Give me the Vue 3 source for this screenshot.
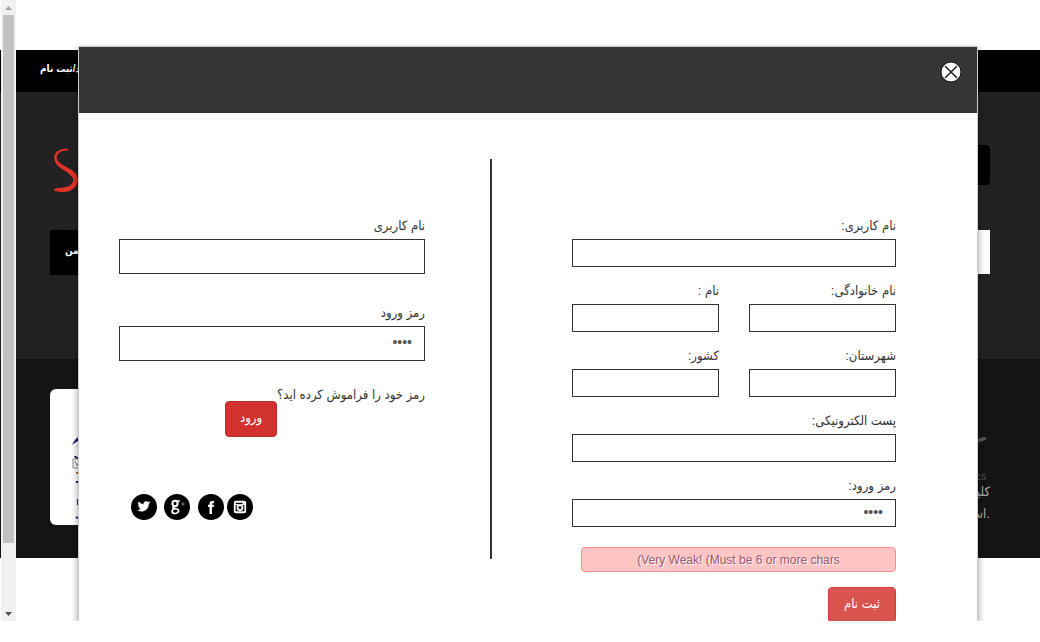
<script setup>
const registerRows = [
  [{ id: 'reg-user', label: 'نام کاربری:', type: 'text', value: '' }],
  [
    { id: 'reg-last', label: 'نام خانوادگی:', type: 'text', value: '' },
    { id: 'reg-first', label: 'نام :', type: 'text', value: '' }
  ],
  [
    { id: 'reg-city', label: 'شهرستان:', type: 'text', value: '' },
    { id: 'reg-country', label: 'کشور:', type: 'text', value: '' }
  ],
  [{ id: 'reg-mail', label: 'پست الکترونیکی:', type: 'email', value: '' }],
  [{ id: 'reg-pass', label: 'رمز ورود:', type: 'password', value: '1234' }]
]
</script>

<template>
  <div class="screen">
    <div class="site">
      <nav class="topbar"><a href="#">ورود/ثبت نام</a></nav>
      <header class="masthead">
        <div class="brand-row">
          <svg class="brand" width="42" height="50" viewBox="0 0 42 50" aria-hidden="true">
            <path d="M18 5C11 4 6 8 6 13C7 23 27 23 27 35C26 46 14 48 5 45L6 44C14 44 24 42 24 35C23 25 5 24 5 13C5 7 12 3 18 5Z" fill="#e43328" stroke="#e43328" stroke-width="1.500" />
          </svg>
          <span class="cart"></span>
        </div>
        <div class="menu-row">
          <a class="menu-link" href="#">انجمن</a>
          <span class="search-box"></span>
        </div>
      </header>
      <footer class="footer">
        <div class="license">
          <svg width="60" height="96" viewBox="0 0 60 96" aria-hidden="true">
            <path d="M2 15Q5 8 14 3V9Q8 10 2 15Z" fill="#18126b" />
            <path d="M3 18L16 10L12 14Z" fill="#c9b5b5" />
            <path d="M5 26q1 3 7 2M6 52h8M6 87q4 3 9 0" fill="none" stroke="#18126b" stroke-width="2" />
            <path d="M3 29h14v9H3zM5 31l2 5 2-5 2 5" fill="none" stroke="#888" />
            <path d="M6 43h5" stroke="#b4673a" stroke-width="2" />
            <path d="M8 69v5h8" fill="none" stroke="#222044" stroke-width="2" />
          </svg>
        </div>
        <div class="about">
          <svg width="60" height="30" viewBox="0 0 60 30" aria-hidden="true">
            <path d="M38 18Q47 4 55 5Q59 7 53 9Q46 10 43 13Z" fill="#555" />
          </svg>
          <small>Comics</small>
          <p>کلیه حقوق</p>
          <p dir="ltr">است.</p>
        </div>
      </footer>
    </div>

    <div class="scrollbar" aria-hidden="true">
      <svg width="15" height="14" viewBox="0 0 15 14"><path d="M4 10L7.500 6L11 10Z" fill="#a3a3a3" /></svg>
      <span class="thumb"></span>
      <svg width="15" height="14" viewBox="0 0 15 14"><path d="M4 5L7.500 9L11 5Z" fill="#505050" /></svg>
    </div>

    <section class="modal" role="dialog" aria-label="ورود/ثبت نام">
      <header class="modal-head">
        <button class="close" type="button" aria-label="بستن">
          <svg width="22" height="22" viewBox="0 0 22 22">
            <circle cx="11" cy="11" r="10" fill="#fff" stroke="#111" />
            <path d="M5 5L17 17M17 5L5 17" stroke="#222" stroke-width="1.500" />
          </svg>
        </button>
      </header>
      <div class="modal-body">
        <form class="login" dir="rtl">
          <div class="field">
            <label for="login-user">نام کاربری</label>
            <input id="login-user" type="text">
          </div>
          <div class="field">
            <label for="login-pass">رمز ورود</label>
            <input id="login-pass" type="password" value="1234">
          </div>
          <div class="login-actions">
            <a href="#">رمز خود را فراموش کرده اید؟</a>
            <button class="btn btn-login" type="button">ورود</button>
          </div>
          <div class="social" dir="ltr">
            <a href="#" aria-label="Twitter">
              <svg width="26" height="26" viewBox="0 0 26 26">
                <circle cx="13" cy="13" r="13" />
                <path transform="translate(6 6) scale(.58)" fill="#fff" stroke="#fff" d="M22 4.500c-.8.400-1.500.600-2.300.700.900-.500 1.500-1.300 1.800-2.200-.8.500-1.700.8-2.600 1a4.200 4.200 0 0 0-7.200 3.800A11.800 11.800 0 0 1 3.100 3.500a4.200 4.200 0 0 0 1.300 5.600c-.7 0-1.300-.2-1.900-.5 0 2 1.400 3.700 3.300 4.100-.6.200-1.200.2-1.900.1.500 1.600 2 2.800 3.900 2.900A8.400 8.400 0 0 1 1.700 17.500 12 12 0 0 0 8 19.300c7.700 0 12.100-6.500 11.800-12.700.9-.6 1.600-1.300 2.200-2.100Z" />
              </svg>
            </a>
            <a href="#" aria-label="Google Plus">
              <svg width="26" height="26" viewBox="0 0 26 26">
                <circle cx="13" cy="13" r="13" />
                <g fill="none" stroke="#fff">
                  <ellipse cx="11" cy="9.500" rx="2.600" ry="2.800" stroke-width="2" />
                  <path d="M12 7h4M10 12.500Q7 14 11 14.500Q15 15 14.500 17.500Q13.500 19.500 11 19.500Q8 19.500 8 17.500Q8 15.500 11 15" stroke-width="1.700" />
                  <path d="M17 10h4M19 8v4" stroke-width=".4" />
                </g>
              </svg>
            </a>
            <a class="facebook" href="#" aria-label="Facebook">
              <svg width="26" height="26" viewBox="0 0 26 26">
                <circle cx="13" cy="13" r="13" />
                <path fill="#fff" d="M11.500 20v-7H10v-2.300h1.500V9.300Q11.500 7 14 7h2v2.300h-1.200q-.8 0-.8.8v.6h2l-.3 2.300H14v7Z" />
              </svg>
            </a>
            <a href="#" aria-label="Instagram">
              <svg width="26" height="26" viewBox="0 0 26 26">
                <circle cx="13" cy="13" r="13" />
                <rect x="7.750" y="7.750" width="10.500" height="10.500" rx="1" fill="none" stroke="#fff" stroke-width="1.800" />
                <circle cx="13" cy="13.500" r="2.500" fill="none" stroke="#fff" stroke-width="1.800" />
                <path d="M7 10.500h4M15 10.500h4" stroke="#fff" />
                <path d="M15.500 8h2v2h-2Z" fill="#fff" />
              </svg>
            </a>
          </div>
        </form>
        <div class="divider"></div>
        <form class="register" dir="rtl">
          <div v-for="row in registerRows" :key="row[0].id" class="form-row">
            <div v-for="field in row" :key="field.id" class="field">
              <label :for="field.id">{{ field.label }}</label>
              <input :id="field.id" :type="field.type" :value="field.value">
            </div>
          </div>
          <div class="strength" dir="ltr">(Very Weak! (Must be 6 or more chars</div>
          <button class="btn btn-register" type="button">ثبت نام</button>
        </form>
      </div>
    </section>
  </div>
</template>

<style>
body {
  margin: 0;
  background: #fff;
}
</style>

<style scoped>
* {
  box-sizing: border-box;
}
.screen {
  position: relative;
  height: calc(100vh - 21px);
  overflow: hidden;
  font-family: "Liberation Sans", "DejaVu Sans Condensed", "DejaVu Sans", sans-serif;
  font-size: 13px;
  line-height: 20px;
  color: #333;
}
a {
  color: inherit;
  text-decoration: none;
}
svg {
  display: block;
}
.site {
  padding-top: 50px;
}
.topbar {
  display: flex;
  height: 42px;
  padding: 9px 40px;
  background: #000;
  color: #fff;
  font-size: 10px;
  font-weight: bold;
  white-space: nowrap;
}
.masthead {
  height: 267px;
  padding: 53px 50px 0;
  background: #222;
}
.brand-row,
.menu-row,
.footer {
  display: flex;
  justify-content: space-between;
}
.brand-row {
  height: 48px;
}
.cart {
  width: 120px;
  height: 40px;
  border-radius: 4px;
  background: #000;
}
.menu-row {
  margin-top: 37px;
}
.menu-link {
  width: 240px;
  height: 45px;
  padding: 11px 15px;
  background: #000;
  color: #fff;
  font-size: 10px;
  font-weight: bold;
}
.search-box {
  width: 200px;
  height: 44px;
  background: #fff;
}
.footer {
  height: 199px;
  padding: 30px 50px;
  background: #141414;
}
.license {
  width: 120px;
  height: 136px;
  padding: 41px 20px 0;
  border-radius: 6px;
  background: #fff;
}
.about {
  display: flex;
  flex-direction: column;
  align-items: flex-end;
  padding-top: 43px;
  color: #aaa;
}
.about small {
  height: 20px;
  padding: 5px 4px 0;
  color: #555;
  font-size: 10px;
}
.about p {
  margin: 0 0 2px;
}
.scrollbar {
  position: absolute;
  inset: 0 auto 0 1px;
  display: flex;
  flex-direction: column;
  width: 15px;
  background: #f1f1f1;
}
.thumb {
  flex: 0 0 85%;
  margin: 1px 2px auto;
  background: #c1c1c1;
}
.modal {
  position: absolute;
  inset: 46px 62px -20px 78px;
  border: 1px solid #ccc;
  background: #fff;
  box-shadow: 0 3px 7px rgba(0, 0, 0, 0.4);
}
.modal-head {
  display: flex;
  justify-content: flex-end;
  height: 66px;
  padding: 14px 15px;
  background: #363638;
}
.close {
  width: 22px;
  height: 22px;
  padding: 0;
  border: 0;
  background: none;
}
.modal-body {
  display: grid;
  grid-template-columns: 371fr 2px 404fr;
  align-items: start;
  padding: 46px 81px 0 40px;
}
.divider {
  height: 400px;
  background: #333;
}
.login {
  margin-right: 65px;
  padding-top: 57px;
}
.register {
  margin-left: 80px;
  padding-top: 57px;
}
.field {
  flex: 1;
  min-width: 0;
}
label {
  display: block;
  height: 23px;
}
input {
  display: block;
  width: 100%;
  height: 28px;
  padding: 0 12px 3px;
  border: 1px solid #333;
  border-radius: 0;
  background: #fff;
  color: #555;
  font: 14px "Liberation Sans", sans-serif;
}
.login input {
  height: 35px;
}
.login .field {
  margin-bottom: 29px;
}
.form-row {
  display: flex;
  gap: 30px;
  margin-bottom: 14px;
}
.login-actions {
  display: flex;
  align-items: flex-start;
  margin-top: -5px;
}
.btn {
  height: 36px;
  padding: 0 15px 3px;
  border: 1px solid #b92c28;
  border-radius: 4px;
  background: #d2322d;
  color: #fff;
  font: inherit;
}
.btn-login {
  margin-top: 16px;
  padding: 0 14px 3px;
}
.btn-register {
  display: block;
  margin-top: 15px;
  border-color: #d43f3a;
  background: #d9534f;
}
.social {
  display: flex;
  gap: 7px;
  margin: 57px 0 0 12px;
}
.facebook {
  margin: 0 -4px 0 1px;
}
.strength {
  height: 25px;
  margin: 20px 0 0 9px;
  border: 1px solid #ff8c8c;
  border-radius: 4px;
  background: #ffc4c4;
  color: #945870;
  font-size: 12px;
  line-height: 24px;
  text-align: center;
  text-shadow: 1px 1px 1px #fff;
}
</style>
